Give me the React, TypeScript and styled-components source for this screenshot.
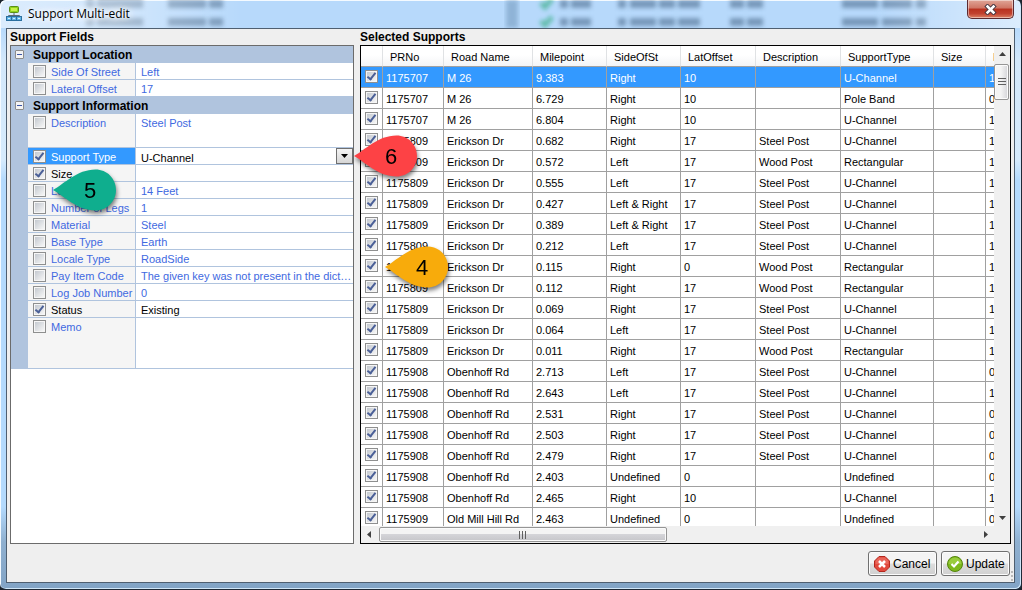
import React, { useState } from "react";
import styled, { createGlobalStyle, css } from "styled-components";

const UI_FONT = '"Liberation Sans", Arial, sans-serif';
const ROYAL = "#4169e1";
const STEEL = "#b0c4de";
const HILITE = "#3399ff";

const GlobalStyle = createGlobalStyle`
  *, *::before, *::after { box-sizing: border-box; }
  body { margin: 0; background: #1c242c; font: 11px/16px ${UI_FONT}; color: #000; }
  svg { flex: none; }
`;

const WindowFrame = styled.div`
  height: 100vh;
  min-height: 320px;
  display: flex;
  flex-direction: column;
  position: relative;
  padding: 0 6px 6px;
  border: 1px solid #1f2a36;
  border-top: 0;
  border-left: 0;
  border-radius: 6px;
  overflow: hidden;
  background: linear-gradient(to bottom, #b7d9fb 0, #b7d9fb 28px, #d3e8fb 60px, #d6ebfd 160px, #b4dafd 180px, #b4dafd 86%, #8fb0d0 92%, #82a4c6 100%);
  box-shadow: inset 1px 1px 0 #f4faff, inset -1px -1px 0 #cfe6f8;
`;

const TitleBar = styled.header`
  flex: none;
  height: 28px;
  display: flex;
  align-items: center;
  gap: 6px;
  position: relative;
`;

const Title = styled.h1`
  margin: 0;
  flex: 1;
  position: relative;
  font: 12px/16px "Open Sans", "Noto Sans", sans-serif;
  text-shadow: 0 0 6px #fff, 0 0 8px #fff, 0 0 10px #fff;
`;

const GlassBackdrop = styled.svg`
  position: absolute;
  left: 0;
  top: 0;
  width: 100%;
  height: 28px;
  pointer-events: none;
`;

const GlassShine = styled.div`
  position: absolute;
  inset: 1px -5px 0 -5px;
  pointer-events: none;
  background: linear-gradient(to right, rgba(255, 255, 255, 0.5), rgba(255, 255, 255, 0.4) 110px, rgba(255, 255, 255, 0) 240px, rgba(255, 255, 255, 0) 86%, rgba(255, 255, 255, 0.5));
`;

const CloseButton = styled.button`
  position: relative;
  align-self: flex-start;
  width: 47px;
  height: 19px;
  margin-right: 1px;
  padding: 0;
  display: flex;
  align-items: center;
  justify-content: center;
  border: 1px solid #5b2a30;
  border-top: 0;
  border-radius: 0 0 5px 5px;
  background: linear-gradient(#e0a597, #cf7564 45%, #b8311f 50%, #c1412f 75%, #db8064);
  box-shadow: inset 0 0 0 1px rgba(255, 255, 255, 0.45);
`;

const Client = styled.main`
  flex: 1;
  min-height: 0;
  display: flex;
  flex-direction: column;
  position: relative;
  border: 1px solid #4f5f70;
  background: #efefef;
`;

const Panels = styled.div`
  flex: 1;
  min-height: 0;
  display: flex;
  gap: 6px;
  padding: 0 3px;
`;

const FieldsSection = styled.section`
  flex: none;
  width: 344px;
  display: flex;
  flex-direction: column;
`;

const SupportsSection = styled.section`
  flex: 1;
  min-width: 0;
  display: flex;
  flex-direction: column;
`;

const SectionTitle = styled.h2`
  margin: 0;
  font: bold 12px/16px ${UI_FONT};
`;

const FieldGrid = styled.div`
  flex: 1;
  min-height: 0;
  border: 1px solid #6b6b6b;
  background: #fff;
`;

const Category = styled.h3`
  margin: 0;
  height: 17px;
  display: flex;
  align-items: center;
  gap: 9px;
  padding-left: 4px;
  background: ${STEEL};
  font: bold 12px/16px ${UI_FONT};
`;

const Expander = styled.button`
  width: 9px;
  height: 9px;
  margin-bottom: 1px;
  padding: 0;
  display: flex;
  align-items: center;
  justify-content: center;
  border: 1px solid #8c8c8c;
  border-radius: 1px;
  background: #f4f4f4;
  &::before { content: ""; width: 5px; height: 1px; background: #3b55a5; }
`;

const FieldRow = styled.div<{ $lines: number }>`
  position: relative;
  display: flex;
  height: ${(p) => p.$lines * 17}px;
  border-left: 17px solid ${STEEL};
`;

const FieldName = styled.label<{ $active: boolean; $on: boolean }>`
  flex: none;
  width: 108px;
  display: flex;
  align-items: flex-start;
  gap: 5px;
  padding-left: 5px;
  white-space: nowrap;
  border-right: 1px solid ${STEEL};
  border-bottom: 1px solid ${STEEL};
  background: ${(p) => (p.$active ? HILITE : "#f5f5f5")};
  color: ${(p) => (p.$active ? "#fff" : p.$on ? "#000" : ROYAL)};
  line-height: 18px;
`;

const FieldValue = styled.div<{ $on: boolean }>`
  flex: 1;
  min-width: 0;
  display: flex;
  border-bottom: 1px solid ${STEEL};
  color: ${(p) => (p.$on ? "#000" : ROYAL)};
  line-height: 18px;
`;

const ValueText = styled.span`
  flex: 1;
  min-width: 0;
  padding-left: 5px;
  overflow: hidden;
  white-space: nowrap;
  text-overflow: ellipsis;
`;

const TypeSelect = styled.select`
  flex: 1;
  min-width: 0;
  padding: 1px 18px 0 5px;
  border: 0;
  border-radius: 0;
  appearance: none;
  color: inherit;
  font: inherit;
  background: transparent;
`;

const SelectArrow = styled.span`
  flex: none;
  width: 17px;
  height: 16px;
  margin-left: -17px;
  display: flex;
  align-items: center;
  justify-content: center;
  pointer-events: none;
  border: 1px solid #707070;
  background: linear-gradient(#f4f4f4, #d6d6d6);
`;

const TickBox = styled.input.attrs({ type: "checkbox" })`
  flex: none;
  appearance: none;
  width: 13px;
  height: 13px;
  margin: 2px 0 0;
  display: block;
  border: 1px solid #8e8f8f;
  background: linear-gradient(135deg, #c4c9d0, #f6f6f6) content-box, #f6f6f6;
  padding: 1px;
  position: relative;
  &:checked::after {
    content: "";
    position: absolute;
    left: 3px;
    top: 0;
    width: 5px;
    height: 9px;
    border: solid #4a5f97;
    border-width: 0 2px 2px 0;
    transform: rotate(38deg);
  }
`;

const GridBox = styled.div`
  flex: 1;
  min-height: 0;
  display: grid;
  grid-template-columns: minmax(0, 1fr) 16px;
  grid-template-rows: minmax(0, 1fr) 17px;
  border: 1px solid #000;
  background: #f0f0f0;
`;

const GridView = styled.div`
  overflow: hidden;
  background: #fff;
`;

const SupportsTable = styled.table`
  width: 726px;
  table-layout: fixed;
  border-collapse: separate;
  border-spacing: 0;
`;

const HeadCell = styled.th`
  height: 21px;
  padding: 2px 0 0 7px;
  overflow: hidden;
  white-space: nowrap;
  text-align: left;
  font-weight: normal;
  border-right: 1px solid #e0e2e4;
  border-bottom: 1px solid #a0a0a0;
  background: linear-gradient(#fff 45%, #f3f4f6);
`;

const rowSelected = css`
  background: ${HILITE};
  color: #fff;
`;

const BodyRow = styled.tr<{ $selected: boolean }>`
  ${(p) => p.$selected && rowSelected}
`;

const Cell = styled.td`
  height: 21px;
  padding: 2px 0 0 3px;
  white-space: nowrap;
  border-right: 1px solid #a0a0a0;
  border-bottom: 1px solid #a0a0a0;
`;

const TickCell = styled(Cell)`
  position: relative;
  padding: 0 0 3px 4px;
`;

const VScroll = styled.div`
  display: flex;
  flex-direction: column;
  align-items: center;
  background: #f0f0f0;
`;

const HScroll = styled.div`
  display: flex;
  align-items: center;
  background: #f0f0f0;
`;

const ArrowButton = styled.button`
  flex: none;
  width: 17px;
  height: 17px;
  padding: 0;
  display: flex;
  align-items: center;
  justify-content: center;
  border: 0;
  background: none;
`;

const Track = styled.div<{ $vertical?: boolean }>`
  flex: 1;
  align-self: stretch;
  display: flex;
  flex-direction: ${(p) => (p.$vertical ? "column" : "row")};
`;

const Thumb = styled.div<{ $vertical?: boolean }>`
  display: flex;
  align-items: center;
  justify-content: center;
  border: 1px solid #959595;
  border-radius: 2px;
  box-shadow: inset 0 0 0 1px #fbfbfb;
  ${(p) =>
    p.$vertical
      ? css`
          height: 36px;
          margin: 1px 1px 0 0;
          background: linear-gradient(to right, #f4f4f4 45%, #d4d4d8);
        `
      : css`
          width: 48%;
          height: 15px;
          margin: 1px;
          background: linear-gradient(#f4f4f4 45%, #d4d4d8 50%, #c6c6ca);
        `}
`;

const Footer = styled.footer`
  flex: none;
  display: flex;
  justify-content: flex-end;
  gap: 4px;
  padding: 7px 4px 6px;
`;

const ActionButton = styled.button`
  width: 69px;
  height: 25px;
  padding: 0 4px 0 5px;
  display: flex;
  align-items: center;
  gap: 3px;
  border: 1px solid #707070;
  border-radius: 3px;
  background: linear-gradient(#f4f4f4 48%, #dddddd 52%, #d0d0d0);
  box-shadow: inset 0 0 0 1px #fcfcfc;
  color: #000;
  font: 12px/16px ${UI_FONT};
`;

const Grip = styled.svg`
  position: absolute;
  right: 0;
  bottom: 1px;
`;

const MarkerSvg = styled.svg<{ $left: number; $top: number }>`
  position: absolute;
  z-index: 5;
  left: ${(p) => p.$left}px;
  top: ${(p) => p.$top}px;
  pointer-events: none;
  overflow: visible;
  filter: drop-shadow(1px 3px 2px rgba(0, 0, 0, 0.5));
`;

function Marker({ n, color, left, top }: { n: string; color: string; left: number; top: number }) {
  return (
    <MarkerSvg $left={left} $top={top} width="64" height="42" viewBox="0 0 64 42">
      <path d="M0 21 C11 15 24 0.500 42.500 0.500 C54 0.500 63 9.500 63 21 C63 32.500 54 41.500 42.500 41.500 C24 41.500 11 27 0 21 Z" fill={color} />
      <text x="37" y="29" textAnchor="middle" fontSize="22" fontFamily="Liberation Sans, sans-serif" fill="#000">
        {n}
      </text>
    </MarkerSvg>
  );
}

type Field = { name: string; value?: string; on?: boolean; lines?: number; active?: boolean };

const locationFields: Field[] = [
  { name: "Side Of Street", value: "Left" },
  { name: "Lateral Offset", value: "17" },
];

const infoFields: Field[] = [
  { name: "Description", value: "Steel Post", lines: 2 },
  { name: "Support Type", value: "U-Channel", on: true, active: true },
  { name: "Size", on: true },
  { name: "Length", value: "14 Feet" },
  { name: "Number of Legs", value: "1" },
  { name: "Material", value: "Steel" },
  { name: "Base Type", value: "Earth" },
  { name: "Locale Type", value: "RoadSide" },
  { name: "Pay Item Code", value: "The given key was not present in the dictionary." },
  { name: "Log Job Number", value: "0" },
  { name: "Status", value: "Existing", on: true },
  { name: "Memo", lines: 3 },
];

const columns: [string, number][] = [
  ["", 22],
  ["PRNo", 61],
  ["Road Name", 89],
  ["Milepoint", 74],
  ["SideOfSt", 74],
  ["LatOffset", 75],
  ["Description", 85],
  ["SupportType", 93],
  ["Size", 52],
  ["Length", 101],
];

const supports: string[][] = [
  ["1175707", "M 26", "9.383", "Right", "10", "", "U-Channel", "", "1"],
  ["1175707", "M 26", "6.729", "Right", "10", "", "Pole Band", "", "0"],
  ["1175707", "M 26", "6.804", "Right", "10", "", "U-Channel", "", "1"],
  ["1175809", "Erickson Dr", "0.682", "Right", "17", "Steel Post", "U-Channel", "", "1"],
  ["1175809", "Erickson Dr", "0.572", "Left", "17", "Wood Post", "Rectangular", "", "1"],
  ["1175809", "Erickson Dr", "0.555", "Left", "17", "Steel Post", "U-Channel", "", "1"],
  ["1175809", "Erickson Dr", "0.427", "Left & Right", "17", "Steel Post", "U-Channel", "", "1"],
  ["1175809", "Erickson Dr", "0.389", "Left & Right", "17", "Steel Post", "U-Channel", "", "1"],
  ["1175809", "Erickson Dr", "0.212", "Left", "17", "Steel Post", "U-Channel", "", "1"],
  ["1175809", "Erickson Dr", "0.115", "Right", "0", "Wood Post", "Rectangular", "", "1"],
  ["1175809", "Erickson Dr", "0.112", "Right", "17", "Wood Post", "Rectangular", "", "1"],
  ["1175809", "Erickson Dr", "0.069", "Right", "17", "Steel Post", "U-Channel", "", "1"],
  ["1175809", "Erickson Dr", "0.064", "Left", "17", "Steel Post", "U-Channel", "", "1"],
  ["1175809", "Erickson Dr", "0.011", "Right", "17", "Wood Post", "Rectangular", "", "1"],
  ["1175908", "Obenhoff Rd", "2.713", "Left", "17", "Steel Post", "U-Channel", "", "0"],
  ["1175908", "Obenhoff Rd", "2.643", "Left", "17", "Steel Post", "U-Channel", "", "1"],
  ["1175908", "Obenhoff Rd", "2.531", "Right", "17", "Steel Post", "U-Channel", "", "0"],
  ["1175908", "Obenhoff Rd", "2.503", "Right", "17", "Steel Post", "U-Channel", "", "0"],
  ["1175908", "Obenhoff Rd", "2.479", "Right", "17", "Steel Post", "U-Channel", "", "0"],
  ["1175908", "Obenhoff Rd", "2.403", "Undefined", "0", "", "Undefined", "", "0"],
  ["1175908", "Obenhoff Rd", "2.465", "Right", "10", "", "U-Channel", "", "1"],
  ["1175909", "Old Mill Hill Rd", "2.463", "Undefined", "0", "", "Undefined", "", "0"],
];

function FieldLine({ field }: { field: Field }) {
  const [on, setOn] = useState(!!field.on);
  const active = !!field.active;
  return (
    <FieldRow $lines={field.lines ?? 1}>
      <FieldName $active={active} $on={on}>
        <TickBox checked={on} onChange={() => setOn(!on)} />
        {field.name}
      </FieldName>
      <FieldValue $on={on}>
        {active ? (
          <>
            <TypeSelect aria-label={field.name} defaultValue={field.value}>
              <option>U-Channel</option>
              <option>Pole Band</option>
              <option>Rectangular</option>
            </TypeSelect>
            <SelectArrow>
              <svg width="7" height="4" viewBox="0 0 7 4"><path d="M0 0h7L3.500 4z" fill="#000" /></svg>
            </SelectArrow>
          </>
        ) : (
          <ValueText>{field.value}</ValueText>
        )}
      </FieldValue>
      {field.name === "Length" && <Marker n="5" color="#0fae8e" left={25} top={-13} />}
      {active && <Marker n="6" color="#fd4245" left={326} top={-13} />}
    </FieldRow>
  );
}

const IconSvg = styled.svg`
  position: relative;
`;

function AppIcon() {
  return (
    <IconSvg width="16" height="16" viewBox="0 0 16 16">
      <path d="M8 7v3M2.500 12V9.500h11V12M8 9v3" stroke="#5a6a72" fill="none" />
      <rect x="3.500" y="0.500" width="9" height="6" rx="1" fill="#8ed41c" stroke="#5c8f16" />
      <rect x="5" y="2" width="6" height="3" fill="#c8f04a" />
      {[0.5, 5.5, 10.5].map((x) => (
        <g key={x}>
          <rect x={x} y="10.500" width="5" height="4" fill="#5fb4e6" stroke="#2b6f9f" />
          <rect x={x + 1.5} y="12" width="2" height="1" fill="#d4efff" />
        </g>
      ))}
    </IconSvg>
  );
}

/* Word-sized smudges of the window behind the glass: [x, width] */
const smudges = [
  [80, 8],
  [91, 46],
  [162, 38],
  [203, 14],
  [554, 8],
  [565, 20],
  [612, 8],
  [624, 26],
  [653, 16],
  [672, 22],
  [724, 14],
  [741, 16],
  [836, 36],
  [876, 30],
  [910, 10],
];

function Backdrop() {
  return (
    <GlassBackdrop aria-hidden="true">
      <defs>
        <filter id="glass" x="-10%" y="-50%" width="120%" height="200%">
          <feGaussianBlur stdDeviation="2" />
        </filter>
      </defs>
      <rect x="500" y="0" width="12" height="28" fill="#7fa4c8" opacity="0.7" filter="url(#glass)" />
      <g filter="url(#glass)" fill="#3a5a7c" opacity="0.5">
        {[0, 18].map((y) => (
          <g key={y}>
            <path d={`M535 ${y + 3}l4 4l7 -8`} stroke="#10a060" strokeWidth="5" fill="none" />
            {smudges.map(([x, w]) => (
              <rect key={x} x={x} y={y} width={w} height="8" />
            ))}
          </g>
        ))}
      </g>
    </GlassBackdrop>
  );
}

const arrowPaths = {
  up: "M1 6L4.500 2L8 6z",
  down: "M1 3L4.500 7L8 3z",
  left: "M6 1L2 4.500L6 8z",
  right: "M3 1L7 4.500L3 8z",
};

function ScrollArrow({ dir }: { dir: keyof typeof arrowPaths }) {
  return (
    <ArrowButton aria-label={"Scroll " + dir}>
      <svg width="9" height="9" viewBox="0 0 9 9"><path d={arrowPaths[dir]} fill="#404040" /></svg>
    </ArrowButton>
  );
}

export default function App() {
  const [ticks, setTicks] = useState(() => supports.map(() => true));
  const toggle = (i: number) => setTicks(ticks.map((t, k) => (k === i ? !t : t)));
  return (
    <>
      <GlobalStyle />
      <WindowFrame>
        <TitleBar>
          <Backdrop />
          <GlassShine />
          <AppIcon />
          <Title>Support Multi-edit</Title>
          <CloseButton aria-label="Close">
            <svg width="13" height="11" viewBox="0 0 13 11">
              <path d="M3.500 2.500l6 6M9.500 2.500l-6 6" stroke="#4a3a44" strokeWidth="4.500" strokeLinecap="square" />
              <path d="M3.500 2.500l6 6M9.500 2.500l-6 6" stroke="#fff" strokeWidth="2.500" strokeLinecap="square" />
            </svg>
          </CloseButton>
        </TitleBar>
        <Client>
          <Panels>
            <FieldsSection>
              <SectionTitle>Support Fields</SectionTitle>
              <FieldGrid>
                <Category><Expander aria-label="Collapse Support Location" />Support Location</Category>
                {locationFields.map((f) => <FieldLine key={f.name} field={f} />)}
                <Category><Expander aria-label="Collapse Support Information" />Support Information</Category>
                {infoFields.map((f) => <FieldLine key={f.name} field={f} />)}
              </FieldGrid>
            </FieldsSection>
            <SupportsSection>
              <SectionTitle>Selected Supports</SectionTitle>
              <GridBox>
                <GridView>
                  <SupportsTable>
                    <colgroup>
                      {columns.map(([name, w]) => <col key={name} width={w} />)}
                    </colgroup>
                    <thead>
                      <tr>{columns.map(([name]) => <HeadCell key={name}>{name}</HeadCell>)}</tr>
                    </thead>
                    <tbody>
                      {supports.map((row, i) => (
                        <BodyRow key={i} $selected={i === 0}>
                          <TickCell>
                            <TickBox aria-label={"Select row " + (i + 1)} checked={ticks[i]} onChange={() => toggle(i)} />
                            {i === 9 && <Marker n="4" color="#f8ab0b" left={24} top={-10} />}
                          </TickCell>
                          {row.map((c, k) => <Cell key={k}>{c}</Cell>)}
                        </BodyRow>
                      ))}
                    </tbody>
                  </SupportsTable>
                </GridView>
                <VScroll>
                  <ScrollArrow dir="up" />
                  <Track $vertical>
                    <Thumb $vertical>
                      <svg width="8" height="8" viewBox="0 0 8 8"><path d="M0 .5h8M0 3.500h8M0 6.500h8" stroke="#606060" /></svg>
                    </Thumb>
                  </Track>
                  <ScrollArrow dir="down" />
                </VScroll>
                <HScroll>
                  <ScrollArrow dir="left" />
                  <Track>
                    <Thumb>
                      <svg width="8" height="8" viewBox="0 0 8 8"><path d="M.5 0v8M3.500 0v8M6.500 0v8" stroke="#606060" /></svg>
                    </Thumb>
                  </Track>
                  <ScrollArrow dir="right" />
                </HScroll>
              </GridBox>
            </SupportsSection>
          </Panels>
          <Footer>
            <ActionButton>
              <svg width="16" height="16" viewBox="0 0 16 16">
                <path d="M5 .5h6L15.500 5v6L11 15.500H5L.5 11V5z" fill="#e2493c" stroke="#b3271e" />
                <path d="M5 1.500h6L14.500 5v3h-13V5z" fill="#ee7a6e" opacity="0.6" />
                <path d="M5 5l6 6M11 5l-6 6" stroke="#fff" strokeWidth="2.500" />
              </svg>
              Cancel
            </ActionButton>
            <ActionButton>
              <svg width="16" height="16" viewBox="0 0 16 16">
                <circle cx="8" cy="8" r="7.500" fill="#7db81c" stroke="#55850f" />
                <path d="M1.500 8a6.500 6.500 0 0113 0z" fill="#a5d44c" opacity="0.7" />
                <path d="M4.500 8l2.500 2.500L11.500 5.500" stroke="#fff" strokeWidth="2.200" fill="none" />
              </svg>
              Update
            </ActionButton>
          </Footer>
          <Grip width="4" height="10" viewBox="0 0 4 10"><path d="M1 0h2v2H1zM1 4h2v2H1zM1 8h2v2H1z" fill="#b8b8b8" /></Grip>
        </Client>
      </WindowFrame>
    </>
  );
}
